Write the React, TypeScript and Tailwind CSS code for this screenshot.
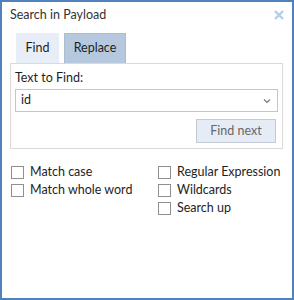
const Check = ({ label }: { label: string }) => (
  <label className="flex items-center gap-[6px] h-[18px] whitespace-nowrap">
    <span className="w-[13px] h-[13px] border border-[#8f8f8f] bg-white shrink-0" />
    <span>{label}</span>
  </label>
);

export default function App() {
  return (
    <div
      className="w-[294px] h-[300px] border-2 border-[#4f81bd] bg-white text-[12.5px] text-[#1e1e1e] flex flex-col"
      style={{ fontFamily: 'Lato, "Noto Sans", sans-serif' }}
    >
      <div className="flex items-center justify-between pl-[8px] pr-[8px] h-[27px]">
        <span className="text-[12.5px] text-[#333]">Search in Payload</span>
        <svg width="10" height="10" viewBox="0 0 10 10" className="mt-[-2px]">
          <path d="M1 1 L9 9 M9 1 L1 9" stroke="#b3cdef" strokeWidth="2.4" />
        </svg>
      </div>

      <div className="flex pl-[14px] gap-[5px] mt-[4px]">
        <div className="w-[43px] h-[30px] bg-[#e8eef7] flex items-center justify-center">Find</div>
        <div className="w-[62px] h-[30px] bg-[#b5c8dd] border border-[#a9bcd2] border-b-0 flex items-center justify-center">
          Replace
        </div>
      </div>

      <div className="ml-[8px] mr-[9px] border border-[#dadada] px-[4px] pt-[5px] pb-[5px]">
        <div className="leading-[17px]">Text to Find:</div>
        <div className="mt-[3px] h-[23px] border border-[#c6c6c6] flex items-center justify-between pl-[5px] pr-[6px]">
          <span>id</span>
          <svg width="8" height="6" viewBox="0 0 8 6">
            <path d="M1 1.5 L4 4.5 L7 1.5" stroke="#777" strokeWidth="1.2" fill="none" />
          </svg>
        </div>
        <div className="flex justify-end mt-[7px] pr-[2px]">
          <div className="w-[80px] h-[24px] bg-[#e6ecf6] border border-[#c3cad5] flex items-center justify-center text-[#666]">
            Find next
          </div>
        </div>
      </div>

      <div className="grid grid-cols-[147px_1fr] pl-[9px] mt-[14px]">
        <div className="flex flex-col">
          <Check label="Match case" />
          <Check label="Match whole word" />
        </div>
        <div className="flex flex-col">
          <Check label="Regular Expression" />
          <Check label="Wildcards" />
          <Check label="Search up" />
        </div>
      </div>
    </div>
  );
}
